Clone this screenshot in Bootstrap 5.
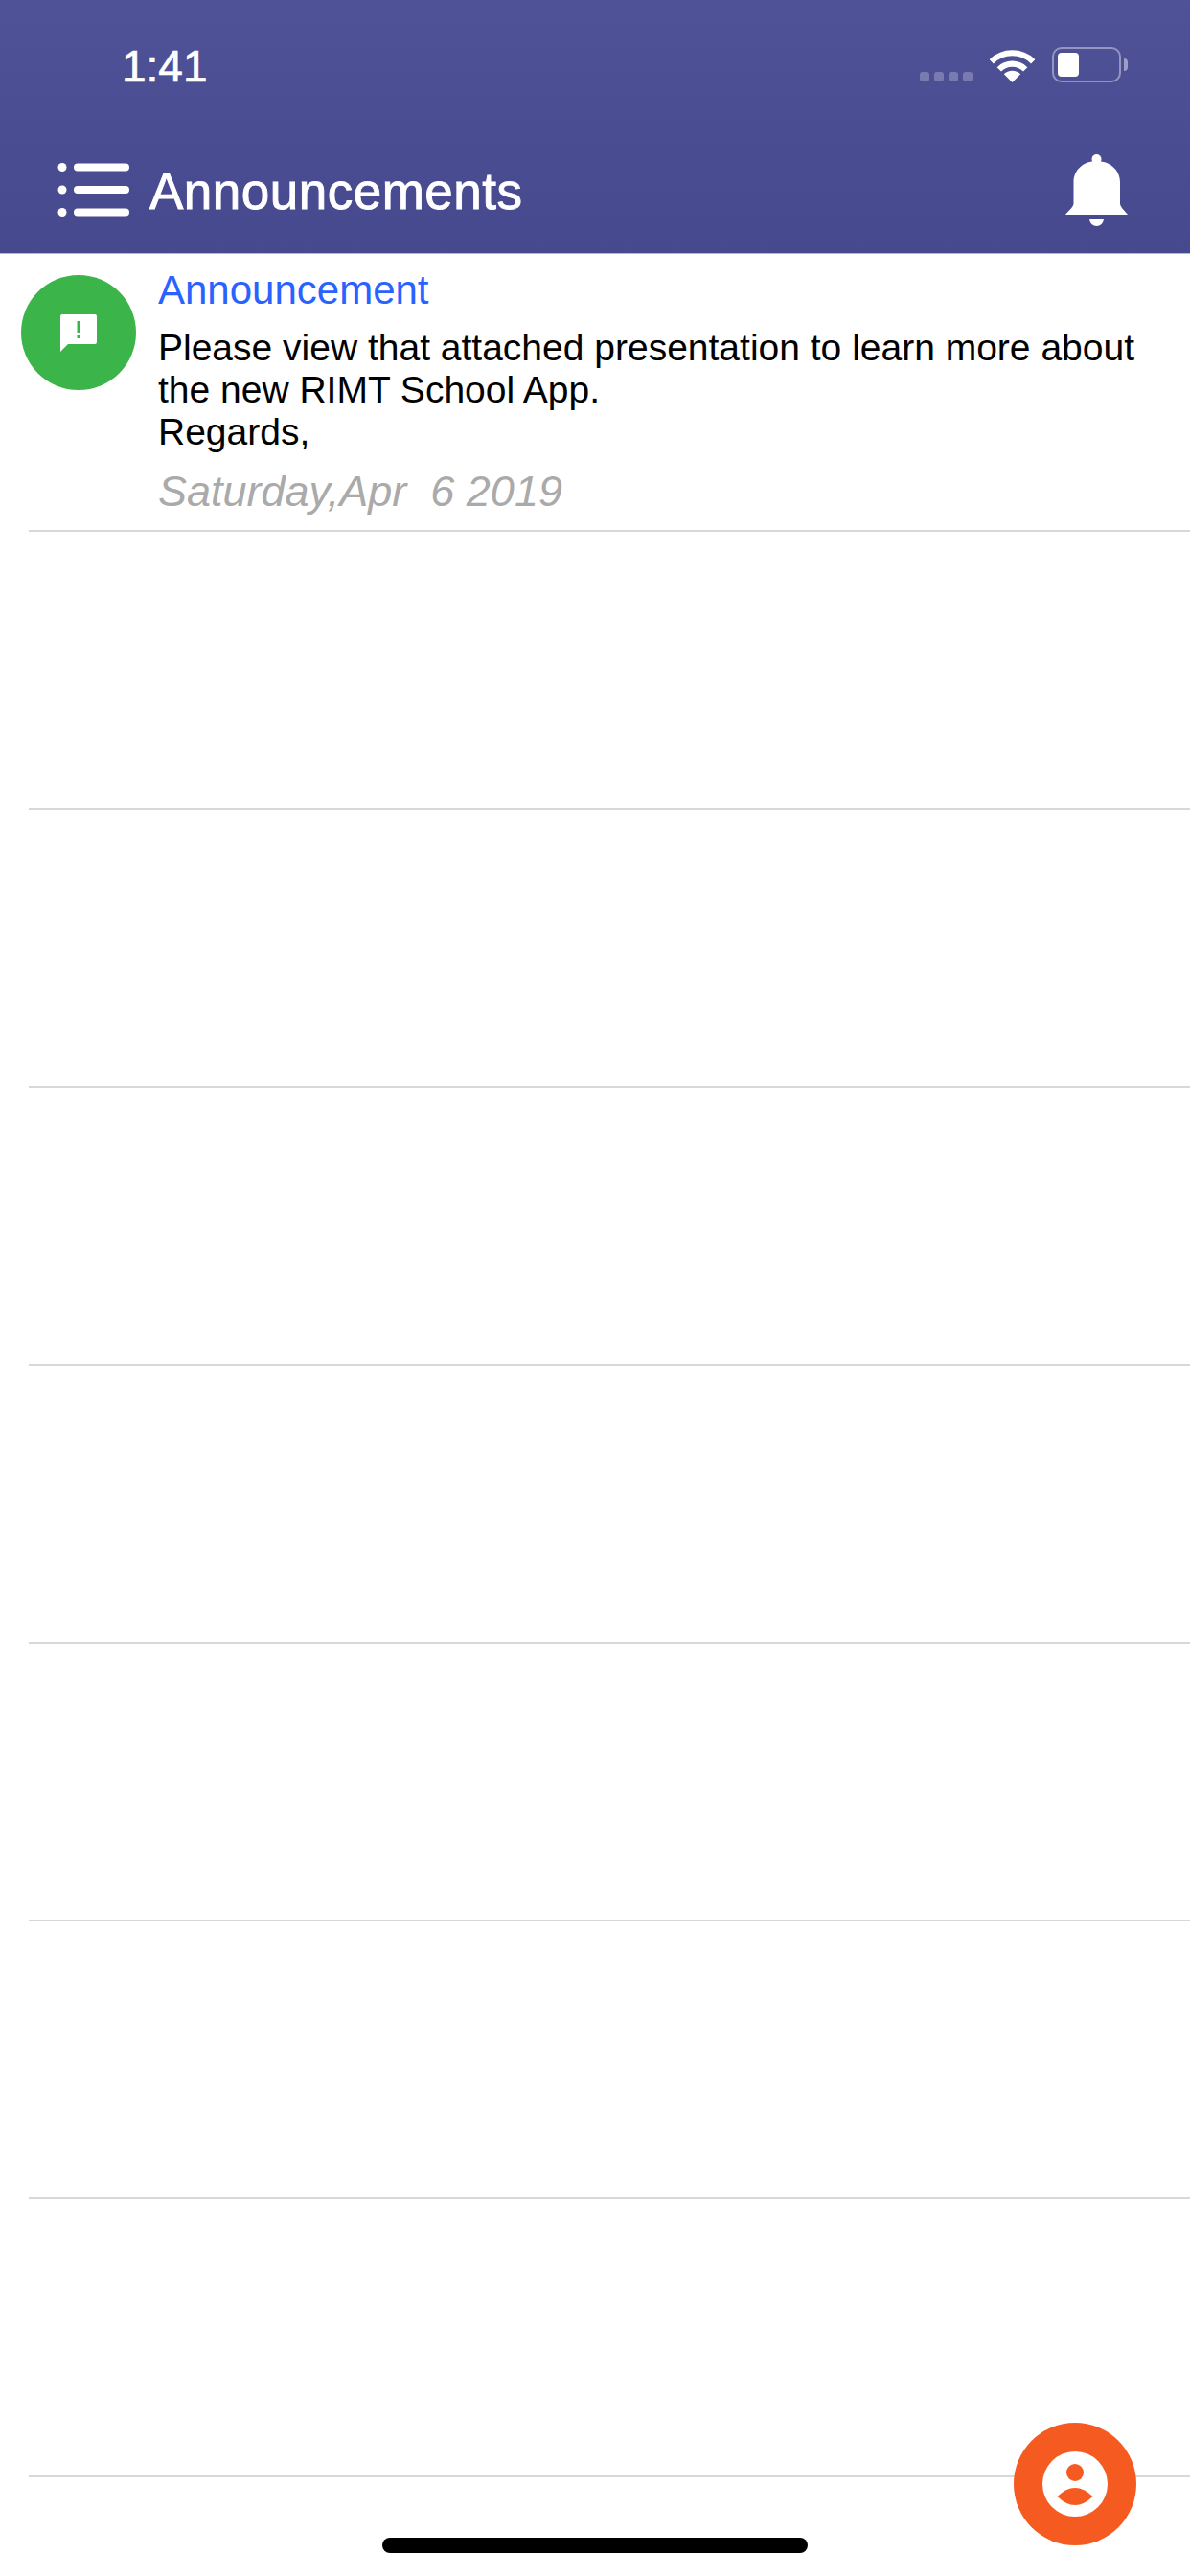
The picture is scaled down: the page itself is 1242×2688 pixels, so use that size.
<!DOCTYPE html>
<html lang="en">
<head>
    <meta charset="UTF-8">
    <meta name="viewport" content="width=device-width, initial-scale=1.0">
    <title>Announcements</title>
    <link href="https://cdn.jsdelivr.net/npm/bootstrap@5.3.0/dist/css/bootstrap.min.css" rel="stylesheet">
    <style>
        body {
            font-family: "Liberation Sans", Arial, sans-serif;
            background: #fff;
            min-height: 2688px;
            position: relative;
        }
        .app-header {
            height: 265px;
            background: linear-gradient(#4f5297, #47498f);
            border-bottom: 1px solid #bbb;
            color: #fff;
        }
        .status-row {
            padding: 46px 65px 0 127px;
        }
        .status-time {
            font-size: 46px;
            line-height: 46px;
            -webkit-text-stroke: .7px #fff;
        }
        .status-icons {
            padding-bottom: 6px;
        }
        .signal-dots {
            gap: 5px;
            margin-right: 18px;
            padding-bottom: 1px;
        }
        .signal-dots span {
            width: 10px;
            height: 10px;
            border-radius: 3px;
            background: rgba(255, 255, 255, .25);
        }
        .battery-box {
            width: 72px;
            height: 37px;
            margin-left: 18px;
            padding: 4px;
            border: 2px solid rgba(255, 255, 255, .4);
            border-radius: 10px;
        }
        .battery-level {
            width: 22px;
            height: 25px;
            border-radius: 4px;
            background: #fff;
        }
        .battery-nub {
            width: 4px;
            height: 13px;
            margin-left: 3px;
            margin-bottom: 12px;
            border-radius: 0 4px 4px 0;
            background: rgba(255, 255, 255, .45);
        }
        .title-row {
            margin-top: 40px;
            height: 132px;
            padding: 0 65px 0 60px;
        }
        .page-title {
            font-size: 53px;
            line-height: 58px;
            letter-spacing: .5px;
            margin: 4px 0 0 21px;
            -webkit-text-stroke: .9px #fff;
        }
        .notice-row {
            height: 290px;
            margin-left: 30px;
            border-bottom: 2px solid #d8d8d8;
        }
        .notice-body {
            margin-left: -8px;
            padding: 14px 30px 0 0;
        }
        .notice-icon {
            width: 120px;
            height: 120px;
            margin: 8px 23px 0 0;
            background: #3bb54a;
        }
        .notice-title {
            font-size: 42px;
            line-height: 48px;
            color: #2962ff;
        }
        .notice-text {
            font-size: 39px;
            line-height: 44px;
            color: #000;
            margin-top: 14px;
        }
        .notice-date {
            font-size: 45px;
            line-height: 48px;
            font-style: italic;
            color: #aaa;
            margin-top: 16px;
            white-space: pre;
        }
        .profile-fab {
            right: 56px;
            top: 2528px;
            width: 128px;
            height: 128px;
            background: #f55a20;
        }
        .home-bar {
            left: 399px;
            top: 2648px;
            width: 444px;
            height: 16px;
            border-radius: 8px;
            background: #000;
        }
    </style>
</head>
<body>
    <!-- Header -->
    <header class="app-header">
        <div class="status-row d-flex justify-content-between">
            <div class="status-time">1:41</div>
            <div class="status-icons d-flex align-items-end">
                <div class="signal-dots d-flex"><span></span><span></span><span></span><span></span></div>
                <svg width="47" height="34" viewBox="0 0 49 36" fill="none">
                    <path d="M1.5 13A32.5 32.5 0 0 1 47.5 13" stroke="#fff" stroke-width="6.500"/>
                    <path d="M10 21.5A20.5 20.5 0 0 1 39 21.5" stroke="#fff" stroke-width="6.500"/>
                    <path d="M24.5 36L15.3 26.8A13 13 0 0 1 33.7 26.8Z" fill="#fff"/>
                </svg>
                <div class="battery-box"><div class="battery-level"></div></div>
                <div class="battery-nub"></div>
            </div>
        </div>
        <nav class="title-row d-flex align-items-center">
            <svg width="75" height="56" viewBox="0 0 75 56" fill="#fff">
                <circle cx="5" cy="4.500" r="4.500"/>
                <circle cx="5" cy="28" r="4.500"/>
                <circle cx="5" cy="51.500" r="4.500"/>
                <rect x="17" y="0.500" width="58" height="8" rx="4"/>
                <rect x="17" y="24" width="58" height="8" rx="4"/>
                <rect x="17" y="47.500" width="58" height="8" rx="4"/>
            </svg>
            <h1 class="page-title fw-normal">Announcements</h1>
            <svg class="ms-auto" width="65" height="75" viewBox="0 0 65 75" fill="#fff">
                <circle cx="32.500" cy="5" r="5"/>
                <path d="M8.500 52V29C8.500 16 19 7 32.500 7S57 16 57 29V52C58 56 62 59 65 63H0C3 59 7.500 56 8.500 52Z"/>
                <path d="M25 67H40C40 72 36 75 32.500 75S25 72 25 67Z"/>
            </svg>
        </nav>
    </header>

    <!-- Announcement list -->
    <main>
        <div class="notice-row">
            <div class="notice-body d-flex">
                <div class="notice-icon rounded-circle flex-shrink-0 d-flex align-items-center justify-content-center">
                    <svg width="38" height="39" viewBox="0 0 38 39">
                        <path fill="#fff" d="M2 0H36A2 2 0 0 1 38 2V29A2 2 0 0 1 36 31H8L0 39V2A2 2 0 0 1 2 0Z"/>
                        <rect fill="#3bb54a" x="17.500" y="7" width="3" height="12"/>
                        <rect fill="#3bb54a" x="17.500" y="22" width="3" height="3"/>
                    </svg>
                </div>
                <div>
                    <div class="notice-title">Announcement</div>
                    <div class="notice-text">Please view that attached presentation to learn more about the new RIMT School App.<br>Regards,</div>
                    <div class="notice-date">Saturday,Apr  6 2019</div>
                </div>
            </div>
        </div>
        <div class="notice-row"></div>
        <div class="notice-row"></div>
        <div class="notice-row"></div>
        <div class="notice-row"></div>
        <div class="notice-row"></div>
        <div class="notice-row"></div>
        <div class="notice-row"></div>
    </main>

    <!-- Floating button -->
    <div class="profile-fab position-absolute rounded-circle d-flex align-items-center justify-content-center">
        <svg width="68" height="68" viewBox="0 0 68 68">
            <circle cx="34" cy="34" r="34" fill="#fff"/>
            <circle cx="34" cy="22" r="9" fill="#f55a20"/>
            <path fill="#f55a20" d="M15.500 47Q34 29 52.500 47Q34 65 15.500 47Z"/>
        </svg>
    </div>

    <div class="home-bar position-absolute"></div>

    <script src="https://cdn.jsdelivr.net/npm/bootstrap@5.3.0/dist/js/bootstrap.bundle.min.js"></script>
</body>
</html>
